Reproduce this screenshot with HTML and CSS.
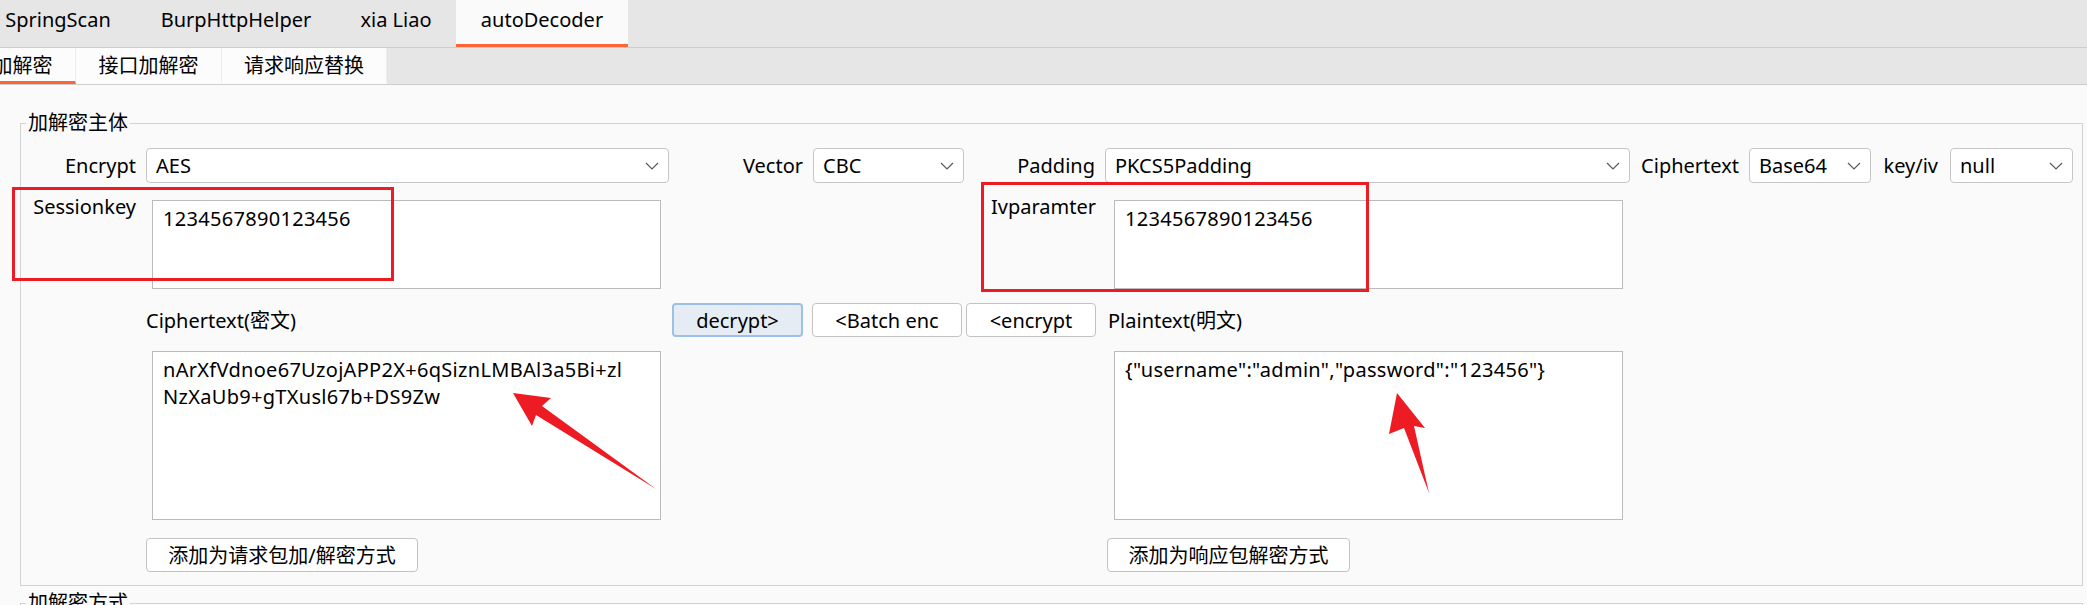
FILE: index.html
```html
<!DOCTYPE html>
<html lang="zh">
<head>
<meta charset="utf-8">
<title>autoDecoder</title>
<link rel="stylesheet" href="styles.css">
</head>
<body>
<div class="tabbar">
  <div class="tab tab-spring">SpringScan</div>
  <div class="tab tab-burp">BurpHttpHelper</div>
  <div class="tab tab-xia">xia Liao</div>
  <div class="tab tab-auto active">autoDecoder</div>
</div>
<div class="subbar">
  <div class="subtab sub-main active">加解密</div>
  <div class="subtab sub-api">接口加解密</div>
  <div class="subtab sub-replace">请求响应替换</div>
</div>
<main class="content">
  <fieldset class="group group-main">
    <legend>加解密主体</legend>
    <div class="row row-combos">
      <span class="lbl lbl-encrypt">Encrypt</span>
      <div class="combo combo-encrypt"><span>AES</span><svg class="chev" viewBox="0 0 14 8"><polyline points="1,1 7,7 13,1"/></svg></div>
      <span class="lbl lbl-vector">Vector</span>
      <div class="combo combo-vector"><span>CBC</span><svg class="chev" viewBox="0 0 14 8"><polyline points="1,1 7,7 13,1"/></svg></div>
      <span class="lbl lbl-padding">Padding</span>
      <div class="combo combo-padding"><span>PKCS5Padding</span><svg class="chev" viewBox="0 0 14 8"><polyline points="1,1 7,7 13,1"/></svg></div>
      <span class="lbl lbl-cipher">Ciphertext</span>
      <div class="combo combo-cipher"><span>Base64</span><svg class="chev" viewBox="0 0 14 8"><polyline points="1,1 7,7 13,1"/></svg></div>
      <span class="lbl lbl-keyiv">key/iv</span>
      <div class="combo combo-keyiv"><span>null</span><svg class="chev" viewBox="0 0 14 8"><polyline points="1,1 7,7 13,1"/></svg></div>
    </div>
    <div class="row row-keys">
      <span class="lbl lbl-top lbl-session">Sessionkey</span>
      <div class="textbox textbox-small">1234567890123456</div>
      <span class="lbl lbl-top lbl-iv">Ivparamter</span>
      <div class="textbox textbox-small">1234567890123456</div>
    </div>
    <div class="row row-actions">
      <span class="caption caption-cipher">Ciphertext(密文)</span>
      <button class="btn btn-focused btn-decrypt">decrypt&gt;</button>
      <button class="btn btn-batch">&lt;Batch enc</button>
      <button class="btn btn-encrypt">&lt;encrypt</button>
      <span class="caption caption-plain">Plaintext(明文)</span>
    </div>
    <div class="row row-texts">
      <div class="textbox textbox-large textbox-cipher">nArXfVdnoe67UzojAPP2X+6qSiznLMBAl3a5Bi+zl
NzXaUb9+gTXusl67b+DS9Zw</div>
      <div class="textbox textbox-large textbox-plain">{"username":"admin","password":"123456"}</div>
    </div>
    <div class="row row-add">
      <button class="btn btn-add-req">添加为请求包加/解密方式</button>
      <button class="btn btn-add-resp">添加为响应包解密方式</button>
    </div>
  </fieldset>
  <fieldset class="group group-mode">
    <legend>加解密方式</legend>
  </fieldset>
</main>
<svg class="annotations" viewBox="0 0 2087 605" width="2087" height="605">
  <rect class="mark" x="13.5" y="188.5" width="379" height="91"/>
  <rect class="mark" x="982.5" y="183.5" width="385" height="107"/>
  <polygon class="arrow" points="513,393 551,398 542,406 656,489 536,415 532,426"/>
  <polygon class="arrow" points="1397,393 1425,428 1414,426 1429,493 1404,428 1389,434"/>
</svg>
</body>
</html>
```
FILE: styles.css
```css
* { box-sizing: border-box; }
html, body { margin: 0; padding: 0; }
body {
  position: relative;
  width: 2087px;
  height: 605px;
  overflow: hidden;
  background: #fafafa;
  font-family: "Noto Sans", "Noto Sans CJK SC", sans-serif;
  font-size: 20px;
  color: #000;
}

/* top tab bar */
.tabbar {
  display: flex;
  height: 48px;
  background: #e6e6e6;
  border-bottom: 1px solid #cdcdcd;
  overflow: hidden;
}
.tab {
  flex: none;
  height: 47px;
  padding-top: 6px;
  line-height: 27px;
  text-align: center;
  white-space: nowrap;
  border-bottom: 3px solid transparent;
}
.tab.active { background: #fafafa; border-bottom-color: #fd6535; }
.tab-spring { margin-left: -20px; width: 156px; }
.tab-burp { width: 200px; }
.tab-xia { width: 120px; }
.tab-auto { width: 172px; }

/* sub tab bar */
.subbar {
  display: flex;
  height: 37px;
  background: #e6e6e6;
  border-bottom: 1px solid #cdcdcd;
  overflow: hidden;
}
.subtab {
  flex: none;
  height: 36px;
  padding-top: 4px;
  line-height: 27px;
  text-align: center;
  white-space: nowrap;
  background: #fcfcfc;
  border-bottom: 3px solid transparent;
  border-right: 1px solid #ececec;
}
.subtab.active { border-bottom-color: #fd6535; }
.sub-main { margin-left: -30px; width: 106px; }
.sub-api { width: 146px; }
.sub-replace { width: 165px; }

/* groups */
.group {
  min-width: 0;
  margin: 28px 4px 0 20px;
  padding: 15px 0 13px 0;
  border: 1px solid #d3d3d3;
}
.group legend {
  margin-left: 5px;
  padding: 0 2px;
  font-size: 20px;
  line-height: 20px;
}
.group-mode { margin-top: 7px; padding: 0; height: 40px; }

.row { display: flex; align-items: center; }
.row-combos { height: 35px; }
.row-keys { margin-top: 17px; align-items: flex-start; }
.row-actions { margin-top: 14px; height: 34px; }
.row-texts { margin-top: 14px; align-items: flex-start; }
.row-add { margin-top: 18px; }

.lbl {
  flex: none;
  text-align: right;
  padding-right: 10px;
  white-space: nowrap;
  line-height: 27px;
}
.lbl-top { margin-top: -7px; }
.lbl-encrypt { width: 125px; }
.lbl-vector { width: 144px; }
.lbl-padding { width: 141px; }
.lbl-cipher { width: 119px; }
.lbl-keyiv { width: 79px; padding-right: 12px; }
.lbl-session { width: 131px; padding-right: 16px; }
.lbl-iv { width: 453px; padding-right: 18px; }

.combo {
  flex: none;
  height: 35px;
  display: flex;
  align-items: center;
  justify-content: space-between;
  padding: 0 9px;
  background: #fff;
  border: 1px solid #c6c6c6;
  border-radius: 4px;
  line-height: 27px;
  white-space: nowrap;
}
.combo-encrypt { width: 523px; }
.combo-vector { width: 151px; }
.combo-padding { width: 525px; }
.combo-cipher { width: 122px; }
.combo-keyiv { width: 123px; }
.chev {
  width: 14px;
  height: 8px;
  fill: none;
  stroke: #5a5a5a;
  stroke-width: 1.2;
}

.textbox {
  flex: none;
  width: 509px;
  padding: 4px 10px;
  background: #fff;
  border: 1px solid #bdbabd;
  line-height: 27px;
  letter-spacing: 0.3px;
  white-space: pre;
  overflow: hidden;
}
.textbox-small { height: 89px; }
.textbox-large { height: 169px; }
.textbox-cipher { margin-left: 131px; }
.textbox-plain { margin-left: 453px; }

.caption { flex: none; white-space: nowrap; line-height: 27px; }
.caption-cipher { width: 651px; padding-left: 125px; }
.caption-plain { margin-left: 12px; }

.btn {
  flex: none;
  height: 34px;
  display: flex;
  align-items: center;
  justify-content: center;
  padding: 0;
  margin: 0;
  font: inherit;
  line-height: 27px;
  color: #000;
  background: #fff;
  border: 1px solid #c2c2c2;
  border-radius: 4px;
  white-space: nowrap;
}
.btn-focused { background: #e6ecf3; border: 2px solid #9cc0e8; }
.btn-decrypt { width: 131px; }
.btn-batch { width: 150px; margin-left: 9px; }
.btn-encrypt { width: 130px; margin-left: 4px; }
.btn-add-req { width: 272px; margin-left: 125px; }
.btn-add-resp { width: 243px; margin-left: 689px; }

/* annotation overlay */
.annotations {
  position: absolute;
  left: 0;
  top: 0;
  pointer-events: none;
}
.mark { fill: none; stroke: #ed1c24; stroke-width: 3; }
.arrow { fill: #ed1c24; }
```
